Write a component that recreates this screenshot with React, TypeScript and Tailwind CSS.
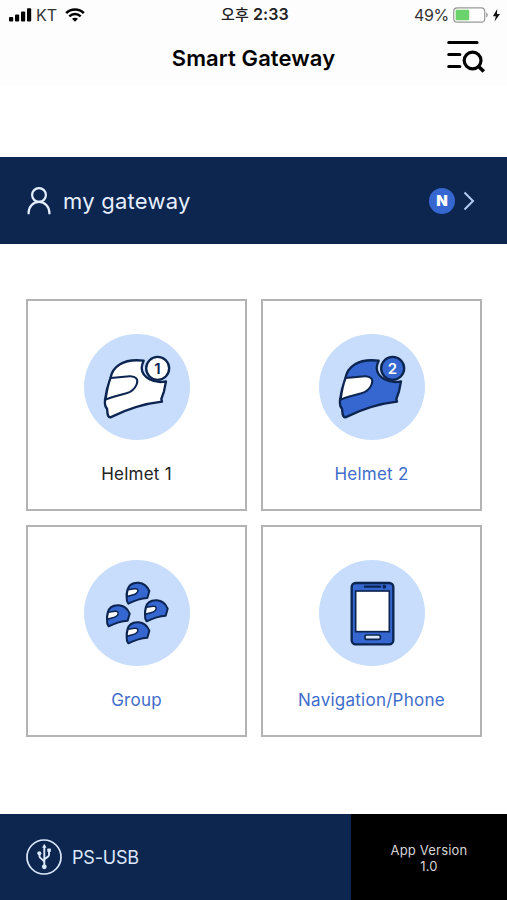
import type { ReactNode } from "react";

/* ================= TYPES ================= */

type MenuItem = {
  label: string;
  icon: ReactNode;
  active: boolean;
};

/* ================= STATUS BAR ICONS ================= */

const SignalIcon = () => (
  <svg className="h-[14px] w-6" viewBox="0 0 24 14" fill="#000">
    <rect x="1" y="9" width="4.200" height="4.500" rx="1" />
    <rect x="7" y="6.500" width="4.200" height="7" rx="1" />
    <rect x="13" y="3.500" width="4.200" height="10" rx="1" />
    <rect x="19" y="0.200" width="4.200" height="13.300" rx="1" />
  </svg>
);

const WifiIcon = () => (
  <svg className="h-[14px] w-5" viewBox="0 0 20 14" fill="none">
    <path d="M1.200 5.100C6 .3 14 .3 18.800 5.100" stroke="#000" strokeWidth="2.700" />
    <path d="M4.300 8.300c3.200-3 8.200-3 11.400 0" stroke="#000" strokeWidth="2.500" />
    <path d="M10 13.800 7 10.800c1.700-1.500 4.300-1.500 6 0z" fill="#000" />
  </svg>
);

const BatteryIcon = () => (
  <svg className="h-4 w-[47px]" viewBox="0 0 47 16" fill="none">
    <rect x="0.700" y="0.800" width="31" height="14.400" rx="3.500" stroke="#999" strokeWidth="1.200" />
    <rect x="2.600" y="2.800" width="13.600" height="10.400" rx="1" fill="#6bd36b" />
    <path d="M33.200 5.500c2 .6 2 4.400 0 5z" fill="#999" />
    <path d="m44.200 2-4.300 7.200h2.900l-1.200 5.200 5.400-7.500h-3z" fill="#111" />
  </svg>
);

const MenuSearchIcon = () => (
  <svg className="h-9 w-10" viewBox="0 0 40 36" fill="none" stroke="#000" strokeWidth="3.200" strokeLinecap="round">
    <path d="M2.800 3.500H31M2.800 15.500H13.800M2.800 27.500H13.800" />
    <circle cx="26.600" cy="21.500" r="8.400" />
    <path d="m32.600 27.500 5.200 5" strokeLinecap="butt" strokeWidth="3.600" />
  </svg>
);

/* ================= BAR ICONS ================= */

const UserIcon = () => (
  <svg className="h-7 w-6" viewBox="0 0 24 28" fill="none" stroke="#e6efff" strokeWidth="2.200">
    <circle cx="12" cy="8" r="6.900" />
    <path d="M1.600 27.300v-1.500c0-5.900 4.200-10.900 10.400-10.900s10.400 5 10.400 10.900v1.500" />
  </svg>
);

const ChevronIcon = () => (
  <svg className="h-5 w-3" viewBox="0 0 12 20" fill="none" stroke="#b3cbf3" strokeWidth="2">
    <path d="m1.500 1.500 8.500 8.500-8.500 8.500" />
  </svg>
);

const UsbIcon = () => (
  <svg className="h-9 w-9" viewBox="0 0 36 36" fill="none" stroke="#dce8fc">
    <circle cx="18" cy="18" r="17" strokeWidth="1.700" />
    <path
      d="M18.300 7v21M13.500 15v2.500c0 2.300 4.800 3 4.800 6M23 12v4c0 2.700-4.700 2.700-4.700 5.500"
      strokeWidth="1.900"
    />
    <g fill="#dce8fc" stroke="none">
      <path d="m18.300 4.800 2.200 3.900h-4.400z" />
      <circle cx="13.300" cy="14.300" r="2" />
      <rect x="21.300" y="9.500" width="3.600" height="3.600" rx="0.800" />
      <circle cx="18.300" cy="27.800" r="2.400" />
    </g>
  </svg>
);

/* ================= MENU ICONS ================= */

const NAVY = "#0b2450";
const BLUE = "#3667d0";

const HelmetIcon = ({ num, fill }: { num: string; fill: string }) => (
  <svg className="h-full w-full" viewBox="0 0 318 318" stroke={NAVY} strokeWidth="7" strokeLinejoin="round">
    <path
      d="M179 80C152 77 125 80 108 91C90 102 82 117 79 133C71 155 66 176 63 198C62 209 63 218 69 224L71 241Q73 250 79 250C120 230 178 209 234 203L232 195L240 172L246 142C210 150 174 130 173 102Q173 93 179 80Z"
      fill={fill}
    />
    <path
      d="M80 132L137 127C156 126 164 137 158 151C153 163 141 174 127 178C107 183 87 188 65 197C68 175 72 153 80 132Z"
      fill="#fff"
      strokeWidth="6"
    />
    <circle cx="221" cy="103" r="34.500" fill={fill} />
    <text
      x="220"
      y="119"
      textAnchor="middle"
      className="font-['Inter'] text-[45px] font-semibold"
      fill={num === "1" ? NAVY : "#fff"}
      stroke="none"
    >
      {num}
    </text>
  </svg>
);

const SmallHelmet = ({ x, y }: { x: number; y: number }) => (
  <g transform={`translate(${x} ${y})`} stroke={NAVY} strokeWidth="6" strokeLinejoin="round">
    <path
      d="M6 25C10 9 23 2 40 3C57 4 66 14 72 28L66 49C47 50 27 57 9 66Q3 59 4 47Q3 36 6 25Z"
      fill={BLUE}
    />
    <path d="M8 24L28 21C40 20 40 29 33 35C26 41 15 40 5 45Q5 34 8 24Z" fill="#fff" strokeWidth="4.500" />
  </g>
);

const GroupIcon = () => (
  <svg className="h-full w-full" viewBox="0 0 318 318">
    <SmallHelmet x={124} y={65} />
    <SmallHelmet x={65} y={133} />
    <SmallHelmet x={179} y={118} />
    <SmallHelmet x={124} y={184} />
  </svg>
);

const PhoneIcon = () => (
  <svg className="h-full w-full" viewBox="0 0 318 318" stroke={NAVY}>
    <rect x="98" y="69" width="125" height="184" rx="12" fill={BLUE} strokeWidth="7" />
    <rect x="110" y="93" width="101" height="122" fill="#fff" strokeWidth="5" />
    <path d="M138 80h45" strokeWidth="7" strokeLinecap="round" />
    <circle cx="196" cy="80" r="5.500" fill={NAVY} stroke="none" />
    <rect x="138" y="225" width="46" height="13" rx="5" fill="#dce8fc" strokeWidth="5" />
  </svg>
);

/* ================= MENU ================= */

const menuItems: MenuItem[] = [
  { label: "Helmet 1", icon: <HelmetIcon num="1" fill="#fff" />, active: false },
  { label: "Helmet 2", icon: <HelmetIcon num="2" fill={BLUE} />, active: true },
  { label: "Group", icon: <GroupIcon />, active: true },
  { label: "Navigation/Phone", icon: <PhoneIcon />, active: true },
];

const MenuCard = ({ label, icon, active }: MenuItem) => (
  <button className="flex flex-col items-center border-2 border-[#b3b3b3] bg-white pt-[33px]">
    <span className="block size-[106px] rounded-full bg-[#c8dcfb]">{icon}</span>
    <span
      className={`mt-[22px] text-[17px] leading-6 tracking-[0.25px] ${active ? "text-[#3f6dcb]" : "text-[#222]"}`}
    >
      {label}
    </span>
  </button>
);

/* ================= UI ================= */

export default function App() {
  return (
    <div className="flex h-[900px] w-[507px] flex-col overflow-hidden bg-white font-['Inter','Noto_Sans_CJK_KR',sans-serif]">
      {/* HEADER */}
      <header className="h-[86px] shrink-0 bg-[#fdfdfd]">
        <div className="grid h-[29px] grid-cols-[1fr_auto_1fr] items-center pl-2 pr-[7px] text-[16px] text-[#333]">
          <div className="flex items-center">
            <SignalIcon />
            <span className="ml-1 mr-2">KT</span>
            <WifiIcon />
          </div>
          <span className="pl-[2px] text-[16px] font-semibold tracking-[0.1px] text-[#222]">
            <span className="text-[15px] font-medium">오후</span> 2:33
          </span>
          <div className="flex items-center justify-end gap-1">
            <span className="tracking-[-0.3px]">49%</span>
            <BatteryIcon />
          </div>
        </div>

        <div className="grid h-[57px] grid-cols-[1fr_auto_1fr] items-center pr-[21px]">
          <h1 className="col-start-2 pl-[21px] pt-px text-[22px] font-semibold tracking-[0.1px] text-black">
            Smart Gateway
          </h1>
          <button className="justify-self-end pb-[2px]">
            <MenuSearchIcon />
          </button>
        </div>
      </header>

      {/* MY GATEWAY */}
      <section className="mt-[71px] flex h-[87px] shrink-0 items-center bg-[#0c2650] pl-[27px] pr-8">
        <UserIcon />
        <span className="ml-3 pt-px text-[22px] tracking-[0.25px] text-[#e6efff]">my gateway</span>
        <span className="ml-auto flex size-[26px] items-center justify-center rounded-full bg-[#3667d0] pt-px text-[15px] font-black text-white">
          N
        </span>
        <span className="ml-2">
          <ChevronIcon />
        </span>
      </section>

      {/* MENU GRID */}
      <main className="mt-[55px] grid shrink-0 grid-cols-[221px_221px] grid-rows-[212px_212px] gap-x-[14px] gap-y-[14px] pl-[26px]">
        {menuItems.map((item) => (
          <MenuCard key={item.label} {...item} />
        ))}
      </main>

      {/* FOOTER */}
      <footer className="mt-auto flex h-[86px] shrink-0">
        <div className="flex w-[351px] items-center bg-[#0c2650] pl-[26px] text-[18px] text-[#dce8fc]">
          <UsbIcon />
          <span className="ml-[10px] pt-px tracking-[-0.2px]">PS-USB</span>
        </div>
        <div className="flex flex-1 flex-col items-center justify-center bg-black pt-[2px] text-[13px] leading-4 tracking-[0.2px] text-[#d5d5d5]">
          <span>App Version</span>
          <span>1.0</span>
        </div>
      </footer>
    </div>
  );
}
